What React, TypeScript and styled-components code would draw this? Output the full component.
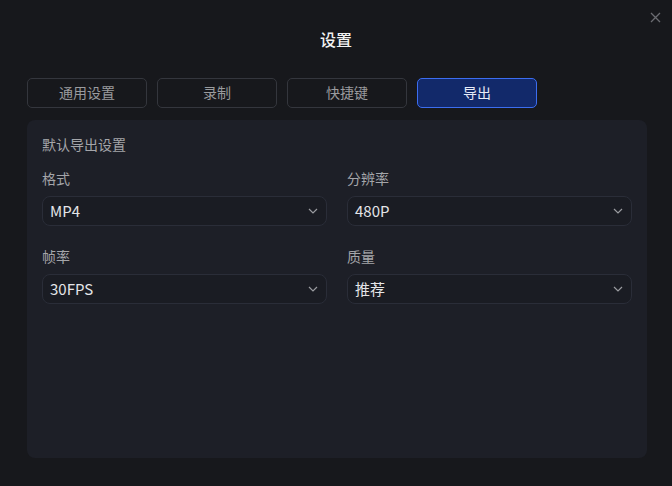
import React from "react";
import styled, { createGlobalStyle } from "styled-components";

const GlobalStyle = createGlobalStyle`
  html, body {
    margin: 0;
    padding: 0;
    background: #17181c;
  }
  body {
    font-family: "Noto Sans CJK SC", "Noto Sans", Inter, sans-serif;
    -webkit-font-smoothing: antialiased;
  }
`;

const Window = styled.div`
  position: relative;
  width: 672px;
  height: 486px;
  box-sizing: border-box;
  padding: 30px 25px 0 27px;
  background: #17181c;
  display: flex;
  flex-direction: column;
`;

const CloseButton = styled.button`
  position: absolute;
  top: 11px;
  right: 11px;
  width: 12px;
  height: 12px;
  padding: 0;
  border: none;
  background: none;
  display: flex;
  align-items: center;
  justify-content: center;
  cursor: pointer;
`;

const Title = styled.h1`
  margin: 0;
  height: 22px;
  line-height: 18px;
  font-size: 16px;
  font-weight: 500;
  color: #f2f2f2;
  text-align: center;
  padding-right: 2px;
`;

const Tabs = styled.div`
  display: flex;
  gap: 10px;
  margin-top: 26px;
`;

const Tab = styled.button<{ $active?: boolean }>`
  width: 120px;
  height: 30px;
  box-sizing: border-box;
  border-radius: 5px;
  border: 1px solid ${(p) => (p.$active ? "#3c6df0" : "#34363d")};
  background: ${(p) => (p.$active ? "#12296a" : "transparent")};
  color: ${(p) => (p.$active ? "#e8ecf8" : "#9a9b9e")};
  font-family: inherit;
  font-size: 14px;
  padding: 0 0 3px;
  cursor: pointer;
`;

const Panel = styled.section`
  margin-top: 12px;
  height: 338px;
  box-sizing: border-box;
  padding: 16px 15px;
  background: #1d1f27;
  border-radius: 8px;
`;

const SectionTitle = styled.div`
  height: 20px;
  font-size: 14px;
  line-height: 16px;
  color: #a4a5a9;
`;

const Grid = styled.div`
  display: grid;
  grid-template-columns: 285px 285px;
  column-gap: 20px;
  row-gap: 22px;
  margin-top: 14px;
`;

const Field = styled.div`
  display: flex;
  flex-direction: column;
  gap: 6px;
`;

const Label = styled.label`
  height: 20px;
  font-size: 14px;
  line-height: 16px;
  color: #a4a5a9;
`;

const Select = styled.div`
  height: 30px;
  box-sizing: border-box;
  padding: 0 8px 1px 7px;
  border: 1px solid #2a2d38;
  border-radius: 8px;
  background: #1a1c23;
  display: flex;
  align-items: center;
  justify-content: space-between;
  color: #e4e5e8;
  font-size: 15px;
`;

const Chevron = () => (
  <svg width="10" height="6" viewBox="0 0 10 6" fill="none">
    <path d="M1 1l4 4 4-4" stroke="#9a9ba0" strokeWidth="1.2" />
  </svg>
);

const fields = [
  { label: "格式", value: "MP4" },
  { label: "分辨率", value: "480P" },
  { label: "帧率", value: "30FPS" },
  { label: "质量", value: "推荐" },
];

const tabs = ["通用设置", "录制", "快捷键", "导出"];

export default function App() {
  return (
    <>
      <GlobalStyle />
      <Window>
        <CloseButton aria-label="关闭">
          <svg width="11" height="11" viewBox="0 0 11 11">
            <path d="M1 1l9 9M10 1l-9 9" stroke="#6b6c71" strokeWidth="1.3" />
          </svg>
        </CloseButton>
        <Title>设置</Title>
        <Tabs>
          {tabs.map((t) => (
            <Tab key={t} $active={t === "导出"}>
              {t}
            </Tab>
          ))}
        </Tabs>
        <Panel>
          <SectionTitle>默认导出设置</SectionTitle>
          <Grid>
            {fields.map((f) => (
              <Field key={f.label}>
                <Label>{f.label}</Label>
                <Select>
                  <span>{f.value}</span>
                  <Chevron />
                </Select>
              </Field>
            ))}
          </Grid>
        </Panel>
      </Window>
    </>
  );
}
